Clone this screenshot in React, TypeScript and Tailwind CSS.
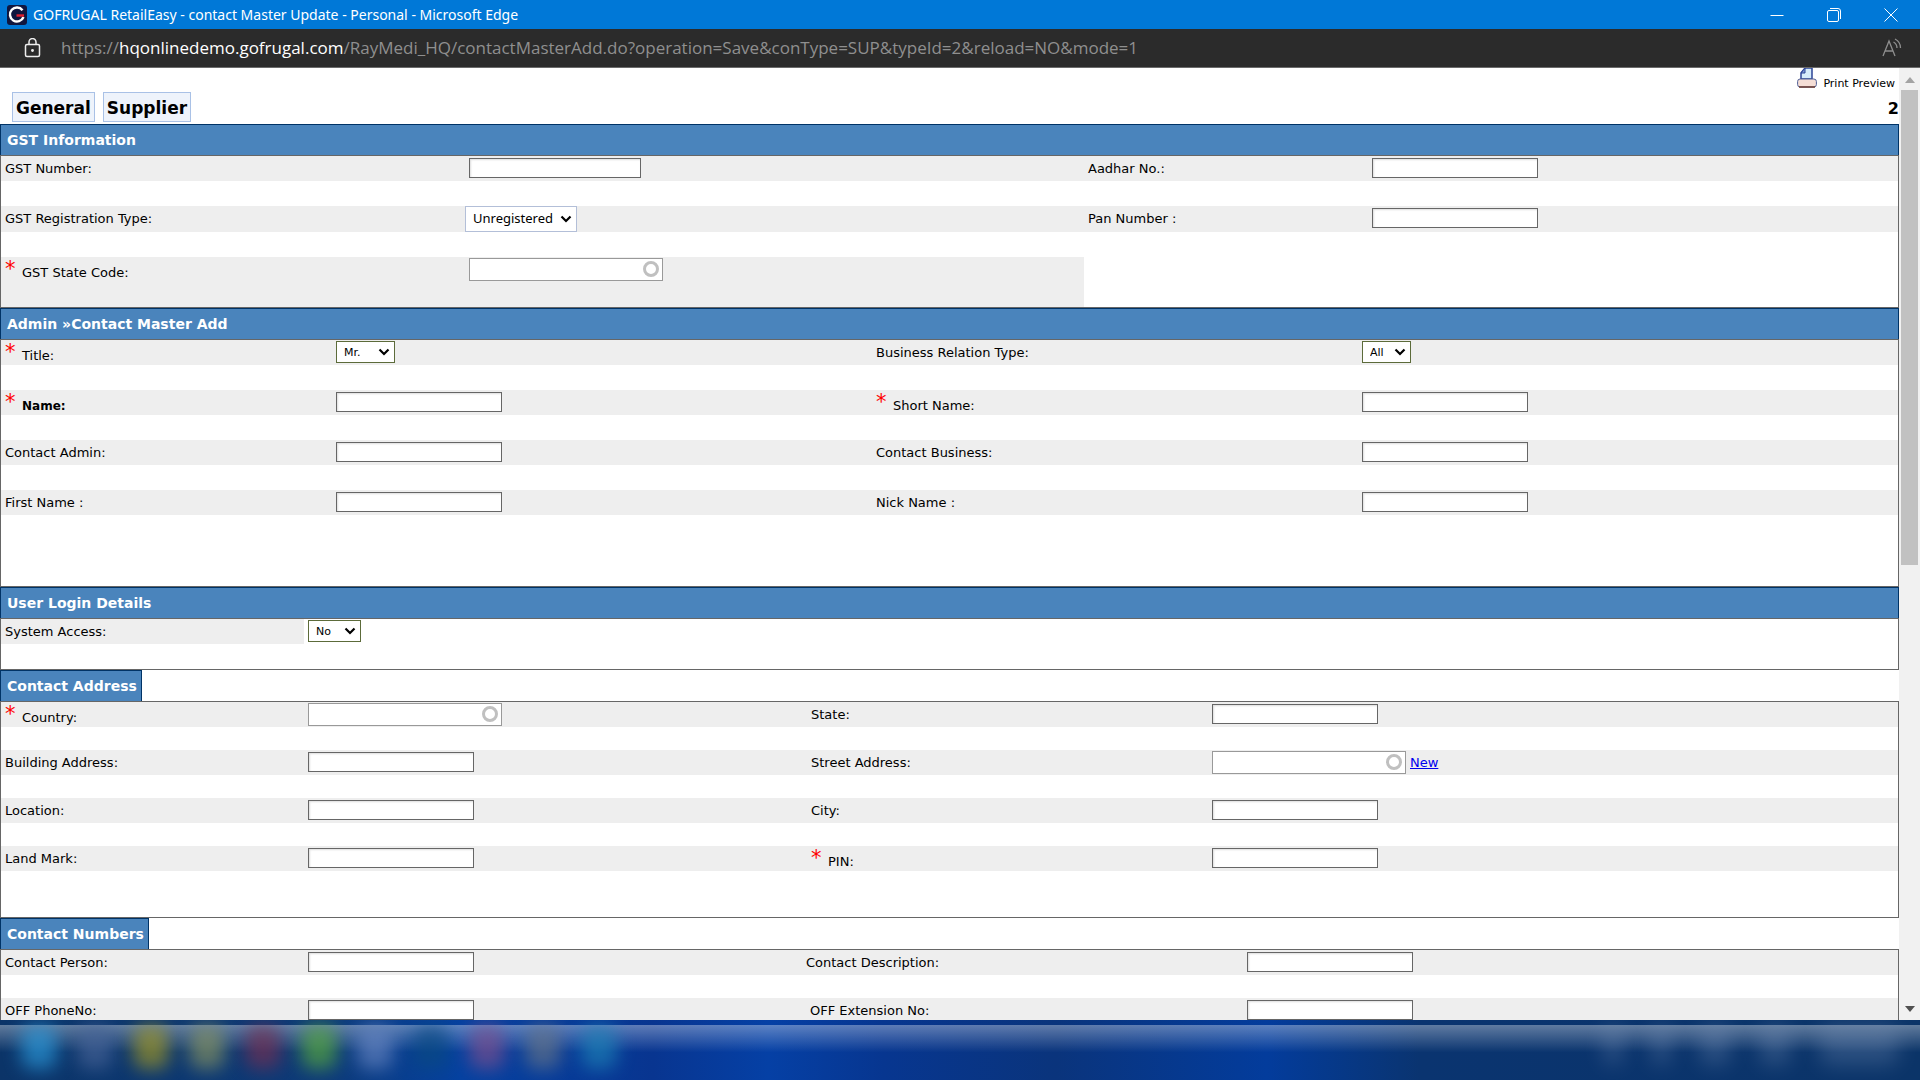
import React from 'react';

interface FieldProps {
  id: string;
  label: string;
  kind?: 'text' | 'wide' | 'combo' | 'select' | 'bigSelect';
  options?: string[];
  required?: boolean;
  bold?: boolean;
  action?: string;
  indent?: boolean;
}

const FieldLabel: React.FC<FieldProps> = ({ id, label, required, bold, indent }) => (
  <label htmlFor={id} className={`flex items-center whitespace-nowrap ${indent ? 'pl-2' : 'pl-1'} ${bold ? 'text-[12px] font-bold' : ''}`}>
    {required ? (
      <>
        <span className="w-[17px] self-start text-[21px] leading-6 font-normal text-[#ff0000]">*</span>
        <span className="pt-[6px] leading-[18px]">{label}</span>
      </>
    ) : (
      label
    )}
  </label>
);

const Chevron: React.FC = () => (
  <svg viewBox="0 0 12 8" className="pointer-events-none absolute right-[5px] top-1/2 h-2 w-3 -translate-y-1/2" fill="none" stroke="#000" strokeWidth="2.2">
    <path d="M1.5 1.5 6 6l4.5-4.5" />
  </svg>
);

const FieldControl: React.FC<FieldProps> = ({ id, kind = 'text', options = [], action }) => {
  if (kind === 'bigSelect') {
    return (
      <div className="flex items-start">
        <div className="relative">
          <select id={id} className="block h-[26px] w-[112px] appearance-none border border-[#b3bfd8] bg-white pl-[7px] font-['Noto_Sans',sans-serif] text-[13px]">
            {options.map((o) => <option key={o}>{o}</option>)}
          </select>
          <Chevron />
        </div>
      </div>
    );
  }
  if (kind === 'select') {
    return (
      <div className="flex items-start pl-1 pt-px">
        <div className="relative">
          <select id={id} className="block h-[22px] appearance-none border border-[#5c6b3a] bg-white pt-0.5 pl-[7px] pr-[26px] text-[11px]">
            {options.map((o) => <option key={o}>{o}</option>)}
          </select>
          <Chevron />
        </div>
      </div>
    );
  }
  if (kind === 'combo') {
    return (
      <div className="flex items-start pl-1 pt-px">
        <div className="relative">
          <input id={id} type="text" className="block h-[23px] w-[194px] border border-[#999] bg-white" />
          <span className="absolute right-1 top-[3px] size-4 rounded-full border-[3px] border-[#c0c0c0]" />
        </div>
        {action && <a href="#" className="pl-1 leading-6 text-[#0000ee] underline">{action}</a>}
      </div>
    );
  }
  return (
    <div className="flex items-start pl-1 pt-[2px]">
      <input
        id={id}
        type="text"
        className={`h-[20px] border border-[#666] bg-white shadow-[inset_1px_1px_2px_#ddd] ${kind === 'wide' ? 'w-[172px]' : 'w-[166px]'}`}
      />
    </div>
  );
};

const Row: React.FC<{ cols: string; left: FieldProps; right?: FieldProps }> = ({ cols, left, right }) => (
  <div className={`grid min-h-[25px] bg-[#eee] ${cols}`}>
    <FieldLabel {...left} />
    <FieldControl {...left} />
    {right && <FieldLabel {...right} />}
    {right && <FieldControl {...right} />}
  </div>
);

const SectionTitle: React.FC<{ children: string; inline?: boolean }> = ({ children, inline }) => (
  <h2 className={`h-[31px] border border-b-0 border-[#003366] bg-[#4a84bc] pl-1.5 text-[14px] leading-[30px] font-bold text-white ${inline ? 'w-fit pr-1' : ''}`}>
    {children}
  </h2>
);

const gstCols = 'grid-cols-[464fr_619fr_284fr_530fr]';
const adminCols = 'grid-cols-[331fr_540fr_486fr_540fr]';
const addressCols = 'grid-cols-[303fr_503fr_401fr_690fr]';
const numberCols = 'grid-cols-[303fr_498fr_441fr_655fr]';

const taskbarBlobs = [
  'bg-[#2d9fe0]',
  'bg-[#4a6699]',
  'bg-[#a89c20]',
  'bg-[#8d9860]',
  'bg-[#7a2f50]',
  'bg-[#5cb03a]',
  'bg-[#6a88c4]',
  'bg-[#0a4a80]',
  'bg-[#84508c]',
  'bg-[#6a7788]',
  'bg-[#1f86b8]',
];

const trayBlobs = ['w-5', 'w-5', 'w-8', 'w-8', 'w-20'];

const GofrugalLogo: React.FC = () => (
  <svg viewBox="0 0 20 20" className="size-5">
    <rect width="20" height="20" rx="3" fill="#10163f" />
    <path d="M15.500 5.200A7 7 0 1 0 16.500 12" fill="none" stroke="#fff" strokeWidth="2.400" />
    <path d="M9.500 10.500H17" stroke="#e02030" strokeWidth="2.400" />
  </svg>
);

const TitleBar: React.FC = () => (
  <header className="flex h-[29px] shrink-0 items-center bg-[#0078d7] pl-[7px] font-['Noto_Sans',sans-serif] text-[14px] text-white">
    <GofrugalLogo />
    <h1 className="pl-1.5">GOFRUGAL RetailEasy - contact Master Update - Personal - Microsoft Edge</h1>
    <div className="ml-auto flex">
      <button aria-label="Minimize" className="flex h-[29px] w-[57px] items-center justify-center">
        <svg viewBox="0 0 14 14" className="size-3.5" stroke="#fff"><path d="M.5 7.5h13" /></svg>
      </button>
      <button aria-label="Restore" className="flex h-[29px] w-[57px] items-center justify-center">
        <svg viewBox="0 0 14 14" className="size-3.5" fill="none" stroke="#fff">
          <rect x=".5" y="2.5" width="11" height="11" rx="1.5" />
          <path d="M3 .5h8a2.5 2.5 0 0 1 2.5 2.5v8" />
        </svg>
      </button>
      <button aria-label="Close" className="flex h-[29px] w-[58px] items-center justify-center">
        <svg viewBox="0 0 14 14" className="size-3.5" stroke="#fff"><path d="m.5.5 13 13m0-13-13 13" /></svg>
      </button>
    </div>
  </header>
);

const AddressBar: React.FC = () => (
  <div className="flex h-[39px] shrink-0 items-center border-b border-[#6b6b6b] bg-[#2b2b2b] pl-6 pr-[17px] font-['Open_Sans',sans-serif]">
    <svg viewBox="0 0 17 20" className="h-5 w-[17px]" fill="none" stroke="#eee" strokeWidth="1.5">
      <rect x="1.5" y="6.5" width="14" height="12" rx="1.5" />
      <path d="M5 6.5V4a3.5 3.5 0 0 1 7 0v2.5" />
      <circle cx="8.5" cy="12.5" r=".7" fill="#eee" />
    </svg>
    <p className="pl-5 text-[17px] whitespace-nowrap text-[#8f8f8f]">
      https://<span className="text-white">hqonlinedemo.gofrugal.com</span>/RayMedi_HQ/contactMasterAdd.do?operation=Save&amp;conType=SUP&amp;typeId=2&amp;reload=NO&amp;mode=1
    </p>
    <button aria-label="Read aloud" className="ml-auto">
      <svg viewBox="0 0 21 20" className="h-5 w-[21px]" fill="none" stroke="#8f8f8f" strokeWidth="1.3">
        <path d="M1 18 7 3l6 15M3.2 13h7.6" />
        <path d="M11.500 4a7 7 0 0 1 3.500 6M13 1a10 10 0 0 1 5.500 9" />
      </svg>
    </button>
  </div>
);

const PrinterIcon: React.FC = () => (
  <svg viewBox="0 0 20 20" className="h-5 w-5">
    <path d="M8 0h7v11H4V5z" fill="#d6ecfb" stroke="#2c4496" strokeWidth="1.5" />
    <path d="M4 5h4V0z" fill="#7f9bd6" stroke="#2c4496" />
    <rect x=".6" y="11" width="18.8" height="8" rx="2.5" fill="#f5ded6" stroke="#4f5f96" />
    <path d="M2 19h16" stroke="#6b3a2e" strokeWidth="1.5" />
  </svg>
);

const Taskbar: React.FC = () => (
  <footer className="relative h-[60px] shrink-0 overflow-hidden bg-[linear-gradient(90deg,#0b3468_0%,#0d3a78_17%,#0541a0_24%,#083590_34%,#0540a5_40%,#073690_46%,#0a347c_55%,#033c9c_66%,#0a3470_74%,#0b3468_100%)] pt-[5px]">
    <div className="flex h-[55px] items-start justify-between bg-linear-to-b from-white/35 to-transparent to-50% px-[21px]">
      <div className="flex gap-5">
        {taskbarBlobs.map((color) => (
          <span key={color} className={`h-11 w-9 rounded-xl opacity-65 blur-[9px] ${color}`} />
        ))}
      </div>
      <div className="flex gap-7">
        {trayBlobs.map((width, i) => (
          <span key={i} className={`h-10 rounded-xl bg-[#8fa5c8] opacity-25 blur-[10px] ${width}`} />
        ))}
      </div>
    </div>
  </footer>
);

export default function App() {
  return (
    <div className="flex h-screen flex-col overflow-hidden bg-white font-['DejaVu_Sans',Verdana,sans-serif] text-[13px] text-black">
      <TitleBar />
      <AddressBar />

      <div className="flex min-h-0 flex-1">
        <main className="min-w-0 flex-1 overflow-hidden">
          <div className="flex h-[56px] items-end justify-between pb-[2px] pl-3">
            <nav className="flex gap-2">
              <button className="h-[30px] border border-[#a9c1e6] bg-[#eef3fb] px-[3px] pt-0.5 text-[17px] leading-6 font-bold">General</button>
              <button className="h-[30px] border border-[#a9c1e6] bg-[#eef3fb] px-[3px] pt-0.5 text-[17px] leading-6 font-bold">Supplier</button>
            </nav>
            <div className="flex h-full flex-col items-end justify-between pb-[3px]">
              <a href="#" className="flex items-start pr-1 text-[11px] leading-[14px]">
                <PrinterIcon />
                <span className="pt-[9px] pl-1.5">Print Preview</span>
              </a>
              <span className="text-[16px] leading-5 font-bold">2</span>
            </div>
          </div>

          <SectionTitle>GST Information</SectionTitle>
          <section className="flex flex-col gap-[25px] border border-[#666]">
            <Row cols={gstCols} left={{ id: 'gstNumber', label: 'GST Number:', kind: 'wide' }} right={{ id: 'aadhar', label: 'Aadhar No.:' }} />
            <Row
              cols={gstCols}
              left={{ id: 'gstType', label: 'GST Registration Type:', kind: 'bigSelect', options: ['Unregistered'] }}
              right={{ id: 'pan', label: 'Pan Number :' }}
            />
            <div className={`grid h-[50px] ${gstCols}`}>
              <div className="col-span-2 grid grid-cols-[464fr_619fr] grid-rows-[25px] bg-[#eee]">
                <FieldLabel id="gstState" label="GST State Code:" required />
                <FieldControl id="gstState" label="GST State Code:" kind="combo" />
              </div>
            </div>
          </section>

          <SectionTitle>Admin »Contact Master Add</SectionTitle>
          <section className="flex flex-col gap-[25px] border border-[#666] pb-[71px]">
            <Row
              cols={adminCols}
              left={{ id: 'title', label: 'Title:', kind: 'select', options: ['Mr.', 'Mrs.'], required: true }}
              right={{ id: 'relation', label: 'Business Relation Type:', kind: 'select', options: ['All'] }}
            />
            <Row cols={adminCols} left={{ id: 'name', label: 'Name:', required: true, bold: true }} right={{ id: 'shortName', label: 'Short Name:', required: true }} />
            <Row cols={adminCols} left={{ id: 'contactAdmin', label: 'Contact Admin:' }} right={{ id: 'contactBusiness', label: 'Contact Business:' }} />
            <Row cols={adminCols} left={{ id: 'firstName', label: 'First Name :' }} right={{ id: 'nickName', label: 'Nick Name :' }} />
          </section>

          <SectionTitle>User Login Details</SectionTitle>
          <section className="border border-[#666] pb-[25px]">
            <div className="grid h-[25px] grid-cols-[303fr_1594fr]">
              <div className="flex bg-[#eee]">
                <FieldLabel id="systemAccess" label="System Access:" />
              </div>
              <FieldControl id="systemAccess" label="System Access:" kind="select" options={['No', 'Yes']} />
            </div>
          </section>

          <SectionTitle inline>Contact Address</SectionTitle>
          <section className="flex flex-col gap-[23px] border border-[#666] pb-[46px]">
            <Row cols={addressCols} left={{ id: 'country', label: 'Country:', kind: 'combo', required: true }} right={{ id: 'state', label: 'State:' }} />
            <Row
              cols={addressCols}
              left={{ id: 'building', label: 'Building Address:' }}
              right={{ id: 'street', label: 'Street Address:', kind: 'combo', action: 'New' }}
            />
            <Row cols={addressCols} left={{ id: 'location', label: 'Location:' }} right={{ id: 'city', label: 'City:' }} />
            <Row cols={addressCols} left={{ id: 'landmark', label: 'Land Mark:' }} right={{ id: 'pin', label: 'PIN:', required: true }} />
          </section>

          <SectionTitle inline>Contact Numbers</SectionTitle>
          <section className="flex flex-col gap-[23px] border border-[#666]">
            <Row cols={numberCols} left={{ id: 'person', label: 'Contact Person:' }} right={{ id: 'description', label: 'Contact Description:' }} />
            <Row cols={numberCols} left={{ id: 'offPhone', label: 'OFF PhoneNo:' }} right={{ id: 'offExtension', label: 'OFF Extension No:', indent: true }} />
          </section>
        </main>

        <div className="flex w-[21px] flex-col items-center bg-[#f1f1f1]" aria-hidden="true">
          <svg viewBox="0 0 10 6" className="mt-[9px] mb-[7px] h-[6px] w-[10px]"><path d="M0 6 5 0l5 6z" fill="#a3a3a3" /></svg>
          <span className="h-[475px] w-[17px] bg-[#c1c1c1]" />
          <svg viewBox="0 0 10 6" className="mt-auto mb-2 h-[6px] w-[10px]"><path d="M0 0h10L5 6z" fill="#505050" /></svg>
        </div>
      </div>

      <Taskbar />
    </div>
  );
}
